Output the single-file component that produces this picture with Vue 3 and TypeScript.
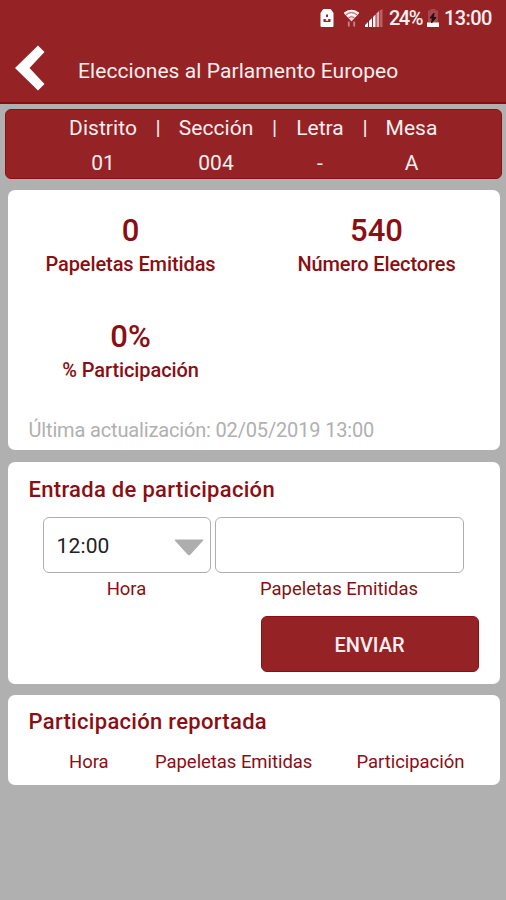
<script setup lang="ts">
import { ref } from 'vue'

interface Station { label: string; value: string }
interface Metric { value: string; label: string }

const station: Station[] = [
  { label: 'Distrito', value: '01' },
  { label: 'Sección', value: '004' },
  { label: 'Letra', value: '-' },
  { label: 'Mesa', value: 'A' },
]
const metrics: Metric[] = [
  { value: '0', label: 'Papeletas Emitidas' },
  { value: '540', label: 'Número Electores' },
  { value: '0%', label: '% Participación' },
]
const hour = ref('12:00')
const ballots = ref('')
</script>

<template>
  <main class="screen">
    <header class="top">
      <div class="status">
        <svg class="sim" viewBox="0 0 14 18"><path d="M4 0h6q.8 0 1.300.8L13.500 4v13q0 1-1 1h-11q-1 0-1-1V4L2.700.8Q3.200 0 4 0z" fill="#fff" /><path d="M6 5.500h2V8H6zM3.500 10h2.300v3H3.500zM8.200 10h2.300v3H8.200zM5.800 11.800h2.400V13H5.800z" fill="#982226" /></svg>
        <svg class="wifi" viewBox="0 0 17 18"><path d="M.8 4.300Q8.500-2.200 16.200 4.300L8.500 12.600z" fill="#efd2d2" /><path d="M1.500 4.200Q8.500-1.300 15.500 4.200M4 7.300Q8.500 3.700 13 7.300" fill="none" stroke="#fff" stroke-width="1.600" /><path d="M3 5.900Q8.500 1.200 14 5.900M5.500 8.800Q8.500 6.500 11.500 8.800" fill="none" stroke="#b04a4e" stroke-width=".8" /><path d="M5.800 12.500v5M11.200 17.500v-5" fill="none" stroke="#c98286" stroke-width="1.800" /></svg>
        <svg class="signal" viewBox="0 0 18 18"><path d="M0 18v-2l3-3v5zM4 18v-6l3-3v9z" fill="#fff" /><path d="M8 18V8l2.500-2.500V18z" fill="#fff" /><path d="M11.500 18V4.500l2.500-2.500v16z" fill="#e0b0b2" /><path d="M14.500 18V1.500L17.500 0v18z" fill="#b96064" /></svg>
        <span class="percent">24%</span>
        <svg class="battery" viewBox="0 0 12 18"><path d="M3.500 0h5v1.500H11V14H1V1.500h2.500z" fill="#a9484c" /><path d="M0 13.500h12V18H0z" fill="#fff" /><path d="M7 4 3 9h2.500L4.500 14 9 8.500H6.500z" fill="#251014" stroke="#251014" /></svg>
        <span class="clock">13:00</span>
      </div>
      <div class="bar">
        <svg class="back" viewBox="0 0 30 46"><path d="M23 .5 0 23l23 22.500 6.500-6.500L14.500 23 29.500 7z" fill="#fff" /></svg>
        <h1>Elecciones al Parlamento Europeo</h1>
      </div>
    </header>

    <section class="station">
      <template v-for="(s, i) in station" :key="s.label">
        <span v-if="i" class="sep">|</span>
        <div class="field"><span>{{ s.label }}</span><span>{{ s.value }}</span></div>
      </template>
    </section>

    <section class="card summary">
      <div class="metrics">
        <div v-for="m in metrics" :key="m.label" class="metric">
          <strong>{{ m.value }}</strong>
          <span>{{ m.label }}</span>
        </div>
      </div>
      <p class="updated">Última actualización: 02/05/2019 13:00</p>
    </section>

    <section class="card entry">
      <h2>Entrada de participación</h2>
      <div class="inputs">
        <div>
          <button class="box select" type="button">
            <span>{{ hour }}</span>
            <svg class="caret" viewBox="0 0 30 17"><path d="M1.500.5h27q1.500 0 .5 1.300L16.500 15.500q-1.500 1.500-3 0L1 1.800Q0 .5 1.500.5z" fill="#aeaeae" /></svg>
          </button>
          <label>Hora</label>
        </div>
        <div>
          <input v-model="ballots" class="box" type="text" />
          <label>Papeletas Emitidas</label>
        </div>
      </div>
      <button class="send" type="button"><span>ENVIAR</span></button>
    </section>

    <section class="card report">
      <h2>Participación reportada</h2>
      <div class="columns"><span>Hora</span><span>Papeletas Emitidas</span><span>Participación</span></div>
    </section>
  </main>
</template>

<style>
body { margin: 0; background: #b0b0b0; }
</style>

<style scoped>
* { box-sizing: border-box; }
.screen { width: 506px; height: 900px; overflow: hidden; background: #b0b0b0; font-family: Roboto, sans-serif; color: #8b0e12; }
h1, h2, p { margin: 0; white-space: nowrap; }
span, label { white-space: nowrap; }
svg { display: block; flex: none; }
button, input { font: inherit; margin: 0; }
.top { height: 104px; background: #952326; border-bottom: 2px solid #900a0c; color: #fbeeee; }
.status { height: 36px; display: flex; align-items: center; padding-left: 320px; font-size: 20px; font-weight: 500; }
.sim { width: 14px; height: 18px; }
.wifi { width: 17px; height: 18px; margin-left: 9px; }
.signal { width: 18px; height: 18px; margin-left: 5px; }
.percent { width: 33px; margin-left: 6px; letter-spacing: -1.5px; }
.battery { width: 12px; height: 18px; margin-left: 5px; }
.clock { margin-left: 5px; letter-spacing: -0.6px; }
.bar { height: 66px; display: flex; align-items: center; padding-left: 15px; }
.back { width: 30px; height: 46px; margin-top: -2px; }
h1 { margin-left: 33px; font-size: 21px; font-weight: 400; line-height: 24px; padding-top: 4px; letter-spacing: 0.07px; }
.station { margin: 5px 4px 0 5px; height: 70px; padding: 6px 0 0 63px; border-radius: 6px; background: #952326; border: 1px solid #900e12; display: grid; grid-template-columns: 68px 42px 74px 43px 48px 42px 51px; color: #fbeeee; font-size: 21px; line-height: 24px; }
.field { display: flex; flex-direction: column; align-items: center; gap: 11px; letter-spacing: 0.05px; }
.sep { text-align: center; }
.card { margin: 11.500px 6.500px 0 7.500px; background: #fff; border-radius: 7px; padding: 0 21px; }
.station + .card { margin-top: 11px; }
.summary { height: 260px; padding-top: 24px; }
.metrics { display: grid; grid-template-columns: 246px 246px; grid-auto-rows: 105.500px; margin: 0 -21px; }
.metric { display: flex; flex-direction: column; align-items: center; }
.metric strong { font-size: 31px; line-height: 34px; font-weight: 500; }
.metric span { font-size: 20px; line-height: 24px; font-weight: 500; margin-top: 4px; letter-spacing: -0.1px; }
.updated { margin-top: -7px; font-size: 20px; line-height: 24px; color: #b0b0b0; letter-spacing: -0.16px; }
.entry { height: 222px; padding-top: 15px; }
h2 { font-size: 22px; line-height: 26px; font-weight: 500; letter-spacing: 0.3px; }
.inputs { display: grid; grid-template-columns: 168px 249px; gap: 4px; margin: 14.500px 0 0 14px; }
.inputs > div { display: flex; flex-direction: column; align-items: center; }
.box { width: 100%; height: 56px; background: #fff; border: 1.500px solid #aeaeae; border-radius: 6px; outline: 0; padding: 0 13px; }
.select { display: flex; align-items: center; justify-content: space-between; padding-right: 6px; color: #222; font-size: 21px; padding-top: 1px; letter-spacing: 0.15px; }
.caret { width: 30px; height: 17px; margin-top: 4px; }
label { font-size: 18.500px; line-height: 22px; margin-top: 5px; }
.send { display: flex; align-items: center; justify-content: center; width: 218px; height: 56px; margin: 15.500px 0 0 auto; padding: 2px 0 0; border: 1px solid #900e12; border-radius: 6px; background: #952326; color: #fbeeee; font-size: 20px; font-weight: 500; }
.report { height: 90px; padding-top: 14px; }
.columns { display: grid; grid-template-columns: 86px 201.500px auto; padding: 16px 0 0 40.500px; font-size: 18.500px; line-height: 22px; letter-spacing: -0.05px; }
</style>
